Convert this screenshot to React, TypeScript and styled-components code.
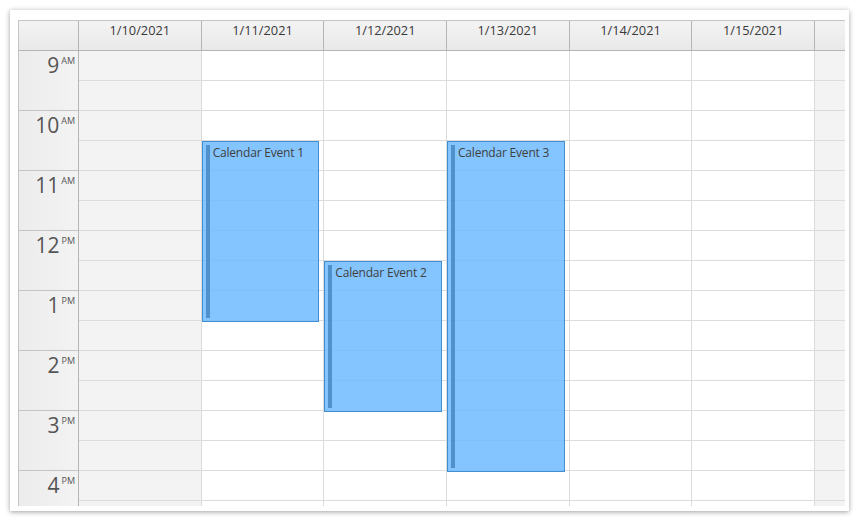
import React from "react";
import styled, { createGlobalStyle } from "styled-components";

const GlobalStyle = createGlobalStyle`
  html, body { margin: 0; padding: 0; background: #ffffff; }
  body { font-family: "Segoe UI", "Open Sans", "Noto Sans", sans-serif; }
`;

const Page = styled.div`
  padding: 10px 0 0 10px;
  width: 860px;
  height: 521px;
  box-sizing: border-box;
  overflow: hidden;
`;

const Card = styled.div`
  width: 839px;
  height: 501px;
  box-sizing: border-box;
  background: #ffffff;
  box-shadow: 0 1px 5px rgba(0, 0, 0, 0.38);
  padding: 10px 0 0 8px;
`;

const Calendar = styled.div`
  width: 827px;
  border-left: 1px solid #c4c4c4;
  border-top: 1px solid #c4c4c4;
  box-sizing: border-box;
  font-size: 12px;
  color: #333333;
`;

const HeaderRow = styled.div`
  display: flex;
  height: 30px;
  box-sizing: border-box;
  border-bottom: 1px solid #b5b5b5;
  background: linear-gradient(to bottom, #f3f3f3, #e9e9e9);
`;

const Corner = styled.div`
  width: 59px;
  flex: none;
  border-right: 1px solid #b5b5b5;
`;

const DayHeader = styled.div`
  flex: 1;
  border-right: 1px solid #b5b5b5;
  text-align: center;
  padding-top: 1px;
  font-size: 12.8px;
  line-height: 16px;
  color: #3a3a3a;
`;

const GutterHeader = styled.div`
  width: 30px;
  flex: none;
`;

const Body = styled.div`
  display: flex;
  height: 455px;
  overflow: hidden;
`;

const RowHeader = styled.div`
  width: 60px;
  flex: none;
  box-sizing: border-box;
  border-right: 1px solid #b5b5b5;
  background: linear-gradient(to right, #ececec, #f3f3f3);
`;

const HourCell = styled.div`
  height: 60px;
  box-sizing: border-box;
  border-bottom: 1px solid #c4c4c4;
  display: flex;
  justify-content: flex-end;
  align-items: flex-start;
  padding: 0 3px 0 0;
  color: #555555;
`;

const HourNum = styled.span`
  font-size: 21px;
  line-height: 26px;
  margin-top: 1px;
`;

const AmPm = styled.span`
  font-size: 9px;
  line-height: 10px;
  margin-top: 5px;
  margin-left: 2px;
`;

const DayColumn = styled.div<{ $off?: boolean }>`
  flex: 1;
  position: relative;
  box-sizing: border-box;
  border-right: 1px solid #dcdcdc;
  background: ${(p) => (p.$off ? "#f3f3f3" : "#ffffff")};
`;

const Cell = styled.div`
  height: 30px;
  box-sizing: border-box;
  border-bottom: 1px solid #dcdcdc;
`;

const Gutter = styled.div`
  width: 30px;
  flex: none;
  background: #f3f3f3;
`;

const Event = styled.div`
  position: absolute;
  left: 0;
  right: 4px;
  box-sizing: border-box;
  background: rgba(112, 188, 255, 0.86);
  border: 1px solid rgba(50, 128, 200, 0.8);
  padding: 3px 0 0 10px;
  line-height: 16px;
  letter-spacing: -0.2px;
  color: #404040;
  overflow: hidden;
`;

const EventBar = styled.div`
  position: absolute;
  left: 3px;
  top: 3px;
  bottom: 3px;
  width: 4px;
  background: rgba(45, 110, 170, 0.6);
`;

const days = ["1/10/2021", "1/11/2021", "1/12/2021", "1/13/2021", "1/14/2021", "1/15/2021"];
const hours: [string, string][] = [
  ["9", "AM"],
  ["10", "AM"],
  ["11", "AM"],
  ["12", "PM"],
  ["1", "PM"],
  ["2", "PM"],
  ["3", "PM"],
  ["4", "PM"],
];

const START = 9;
const HOUR_PX = 60;

const events = [
  { day: 1, start: 10.5, end: 13.5, text: "Calendar Event 1" },
  { day: 2, start: 12.5, end: 15, text: "Calendar Event 2" },
  { day: 3, start: 10.5, end: 16, text: "Calendar Event 3" },
];

const cellCount = hours.length * 2;

export default function App() {
  return (
    <>
      <GlobalStyle />
      <Page>
        <Card>
          <Calendar>
            <HeaderRow>
              <Corner />
              {days.map((d) => (
                <DayHeader key={d}>{d}</DayHeader>
              ))}
              <GutterHeader />
            </HeaderRow>
            <Body>
              <RowHeader>
                {hours.map(([h, ap]) => (
                  <HourCell key={h}>
                    <HourNum>{h}</HourNum>
                    <AmPm>{ap}</AmPm>
                  </HourCell>
                ))}
              </RowHeader>
              {days.map((d, i) => (
                <DayColumn key={d} $off={i === 0}>
                  {Array.from({ length: cellCount }).map((_, k) => (
                    <Cell key={k} />
                  ))}
                  {events
                    .filter((e) => e.day === i)
                    .map((e) => (
                      <Event
                        key={e.text}
                        style={{
                          top: (e.start - START) * HOUR_PX,
                          height: (e.end - e.start) * HOUR_PX + 1,
                        }}
                      >
                        <EventBar />
                        {e.text}
                      </Event>
                    ))}
                </DayColumn>
              ))}
              <Gutter>
                {Array.from({ length: cellCount }).map((_, k) => (
                  <Cell key={k} />
                ))}
              </Gutter>
            </Body>
          </Calendar>
        </Card>
      </Page>
    </>
  );
}
